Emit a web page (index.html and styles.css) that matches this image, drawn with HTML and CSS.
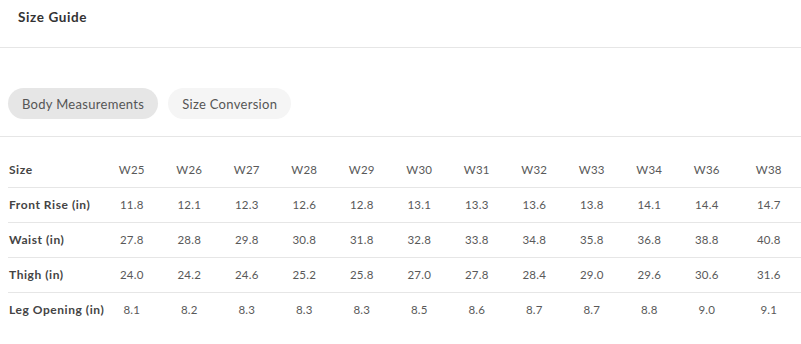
FILE: index.html
```html
<!DOCTYPE html>
<html lang="en">
<head>
<meta charset="utf-8">
<title>Size Guide</title>
<link rel="stylesheet" href="styles.css">
</head>
<body>
<header class="title-bar"><h1 class="title">Size Guide</h1></header>
<nav class="tabs">
  <button class="tab tab-active">Body Measurements</button>
  <button class="tab">Size Conversion</button>
</nav>
<section class="table-wrap">
  <table class="size-table">
    <tr><th>Size</th><td>W25</td><td>W26</td><td>W27</td><td>W28</td><td>W29</td><td>W30</td><td>W31</td><td>W32</td><td>W33</td><td>W34</td><td>W36</td><td>W38</td></tr>
    <tr><th>Front Rise (in)</th><td>11.8</td><td>12.1</td><td>12.3</td><td>12.6</td><td>12.8</td><td>13.1</td><td>13.3</td><td>13.6</td><td>13.8</td><td>14.1</td><td>14.4</td><td>14.7</td></tr>
    <tr><th>Waist (in)</th><td>27.8</td><td>28.8</td><td>29.8</td><td>30.8</td><td>31.8</td><td>32.8</td><td>33.8</td><td>34.8</td><td>35.8</td><td>36.8</td><td>38.8</td><td>40.8</td></tr>
    <tr><th>Thigh (in)</th><td>24.0</td><td>24.2</td><td>24.6</td><td>25.2</td><td>25.8</td><td>27.0</td><td>27.8</td><td>28.4</td><td>29.0</td><td>29.6</td><td>30.6</td><td>31.6</td></tr>
    <tr><th>Leg Opening (in)</th><td>8.1</td><td>8.2</td><td>8.3</td><td>8.3</td><td>8.3</td><td>8.5</td><td>8.6</td><td>8.7</td><td>8.7</td><td>8.8</td><td>9.0</td><td>9.1</td></tr>
  </table>
</section>
</body>
</html>
```
FILE: styles.css
```css
html, body {
  margin: 0;
  padding: 0;
  background: #fff;
  font-family: "Lato", "Open Sans", sans-serif;
  color: #444;
}
.title-bar {
  height: 40px;
  padding: 7px 18px 0;
  border-bottom: 1px solid #e6e6e6;
}
.title {
  margin: 0;
  font-size: 13.5px;
  line-height: 20px;
  font-weight: 700;
  color: #333;
  letter-spacing: 0.6px;
}
.tabs {
  display: flex;
  gap: 10px;
  padding: 40px 8px 17px;
  border-bottom: 1px solid #e6e6e6;
}
.tab {
  height: 31px;
  padding: 0 14px;
  border: none;
  border-radius: 16px;
  background: #f5f5f5;
  font-family: inherit;
  font-size: 13px;
  color: #555;
  letter-spacing: 0.3px;
}
.tab-active {
  background: #e6e6e6;
}
.table-wrap {
  padding: 15px 0 0 8px;
}
.size-table {
  border-collapse: collapse;
  table-layout: fixed;
  width: 793px;
}
.size-table tr {
  height: 35px;
  border-bottom: 1px solid #e6e6e6;
}
.size-table tr:last-child {
  border-bottom: none;
}
.size-table th {
  width: 94px;
  padding: 0 0 0 1px;
  text-align: left;
  font-size: 12px;
  font-weight: 700;
  color: #444;
  letter-spacing: 0.55px;
  white-space: nowrap;
}
.size-table td {
  width: 57.5px;
  padding: 0;
  text-align: center;
  font-size: 11.5px;
  color: #595959;
  letter-spacing: 0.2px;
}
.size-table td:last-child {
  width: 66.5px;
  padding-right: 9px;
}
```
